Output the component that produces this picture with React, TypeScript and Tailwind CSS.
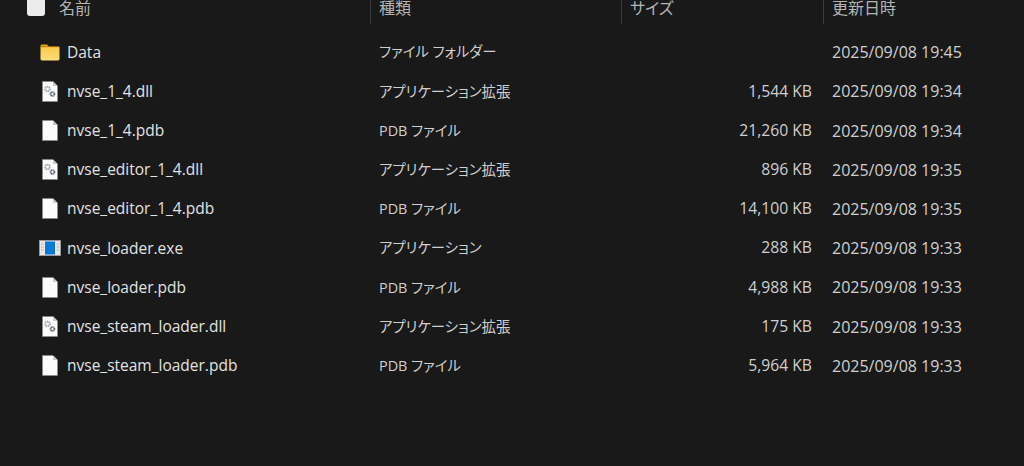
const files = [
  { name: 'Data', type: 'ファイル フォルダー', size: '', date: '2025/09/08 19:45', icon: 'folder' },
  { name: 'nvse_1_4.dll', type: 'アプリケーション拡張', size: '1,544 KB', date: '2025/09/08 19:34', icon: 'dll' },
  { name: 'nvse_1_4.pdb', type: 'PDB ファイル', size: '21,260 KB', date: '2025/09/08 19:34', icon: 'file' },
  { name: 'nvse_editor_1_4.dll', type: 'アプリケーション拡張', size: '896 KB', date: '2025/09/08 19:35', icon: 'dll' },
  { name: 'nvse_editor_1_4.pdb', type: 'PDB ファイル', size: '14,100 KB', date: '2025/09/08 19:35', icon: 'file' },
  { name: 'nvse_loader.exe', type: 'アプリケーション', size: '288 KB', date: '2025/09/08 19:33', icon: 'exe' },
  { name: 'nvse_loader.pdb', type: 'PDB ファイル', size: '4,988 KB', date: '2025/09/08 19:33', icon: 'file' },
  { name: 'nvse_steam_loader.dll', type: 'アプリケーション拡張', size: '175 KB', date: '2025/09/08 19:33', icon: 'dll' },
  { name: 'nvse_steam_loader.pdb', type: 'PDB ファイル', size: '5,964 KB', date: '2025/09/08 19:33', icon: 'file' },
]

function FolderIcon() {
  return (
    <svg width="20" height="17" viewBox="0 0 20 17" className="block">
      <defs>
        <linearGradient id="folderFill" x1="0" y1="0" x2="0" y2="1">
          <stop offset="0" stopColor="#fbc94a" />
          <stop offset="1" stopColor="#fedc7c" />
        </linearGradient>
      </defs>
      <path d="M0.500 2C0.500 1.200 1.100 0.500 1.900 0.500H7L9 2.500H0.500z" fill="#eaa317" />
      <path d="M0.500 3h18.300c.4 0 .7.300.7.700v11.100c0 .9-.7 1.700-1.600 1.700H2.100C1.200 16.500 0.500 15.700 0.500 14.800z" fill="url(#folderFill)" />
      <path d="M0.500 2.500h19v1h-19z" fill="#f0ab1e" />
    </svg>
  )
}

function Sheet({ children }: { children?: React.ReactNode }) {
  return (
    <svg width="16" height="21" viewBox="0 0 16 21" className="block">
      <path d="M0.500 0.500h10.500l4.500 4.500v15.500H0.500z" fill="#fbfbfb" stroke="#8a8a8a" strokeWidth="0.600" />
      <path d="M11 0.500V5h4.500z" fill="#c9c9c9" />
      {children}
    </svg>
  )
}

function DllIcon() {
  return (
    <Sheet>
      <circle cx="5.500" cy="8" r="2.300" fill="none" stroke="#a3acb6" strokeWidth="2" strokeDasharray="1.300 0.500" />
      <circle cx="10.500" cy="13" r="1.900" fill="none" stroke="#5f6770" strokeWidth="1.800" strokeDasharray="1.200 0.400" />
    </Sheet>
  )
}

function ExeIcon() {
  return (
    <svg width="22" height="16" viewBox="0 0 22 16" className="block">
      <rect x="0.300" y="0.300" width="21.400" height="15.400" fill="#e8e8e8" stroke="#8f8f8f" strokeWidth="0.600" />
      <rect x="6" y="1.500" width="10" height="13" fill="#0f78d4" />
      <path d="M2 4h2.500M2 7h2.500M2 10h2.500M17.500 4H20M17.500 7H20M17.500 10H20" stroke="#b5b5b5" />
    </svg>
  )
}

function FileIcon({ kind }: { kind: string }) {
  if (kind === 'folder') return <FolderIcon />
  if (kind === 'dll') return <DllIcon />
  if (kind === 'exe') return <ExeIcon />
  return <Sheet />
}

export default function App() {
  return (
    <div className="h-[466px] w-[1024px] overflow-hidden bg-[#191919] font-['Open_Sans','Noto_Sans_CJK_JP',sans-serif] text-[#cfcfcf]">
      {/* Header */}
      <div className="grid h-6 grid-cols-[370px_251px_202px_201px] text-[16px] leading-4 text-[#b4b4b4] [font-feature-settings:'palt']">
        <div className="flex h-4 items-center">
          <div className="ml-[27px] -mt-[6px] h-[21px] w-[18px] shrink-0 rounded-[3px] bg-[#ececec]" />
          <span className="ml-[14px]">名前</span>
        </div>
        <div className="h-6 border-l border-[#3c3c3c] pl-2">種類</div>
        <div className="h-6 border-l border-[#3c3c3c] pl-2">サイズ</div>
        <div className="h-6 border-l border-[#3c3c3c] pl-2">更新日時</div>
      </div>

      {/* Rows */}
      <div className="mt-[8.6px]">
        {files.map((f) => (
          <div key={f.name} className="grid h-[39.2px] grid-cols-[370px_251px_202px_201px] items-center">
            <div className="flex items-center">
              <div className="flex w-[67px] shrink-0 justify-center pl-[33px]">
                <FileIcon kind={f.icon} />
              </div>
              <span className="text-[15.5px] text-[#e2e2e2]">{f.name}</span>
            </div>
            <div className="pl-[9px] text-[14.4px] [font-feature-settings:'palt']">{f.type}</div>
            <div className="pr-[11px] text-right text-[15.7px]">{f.size}</div>
            <div className="pl-[9px] text-[16px]">{f.date}</div>
          </div>
        ))}
      </div>
    </div>
  )
}
